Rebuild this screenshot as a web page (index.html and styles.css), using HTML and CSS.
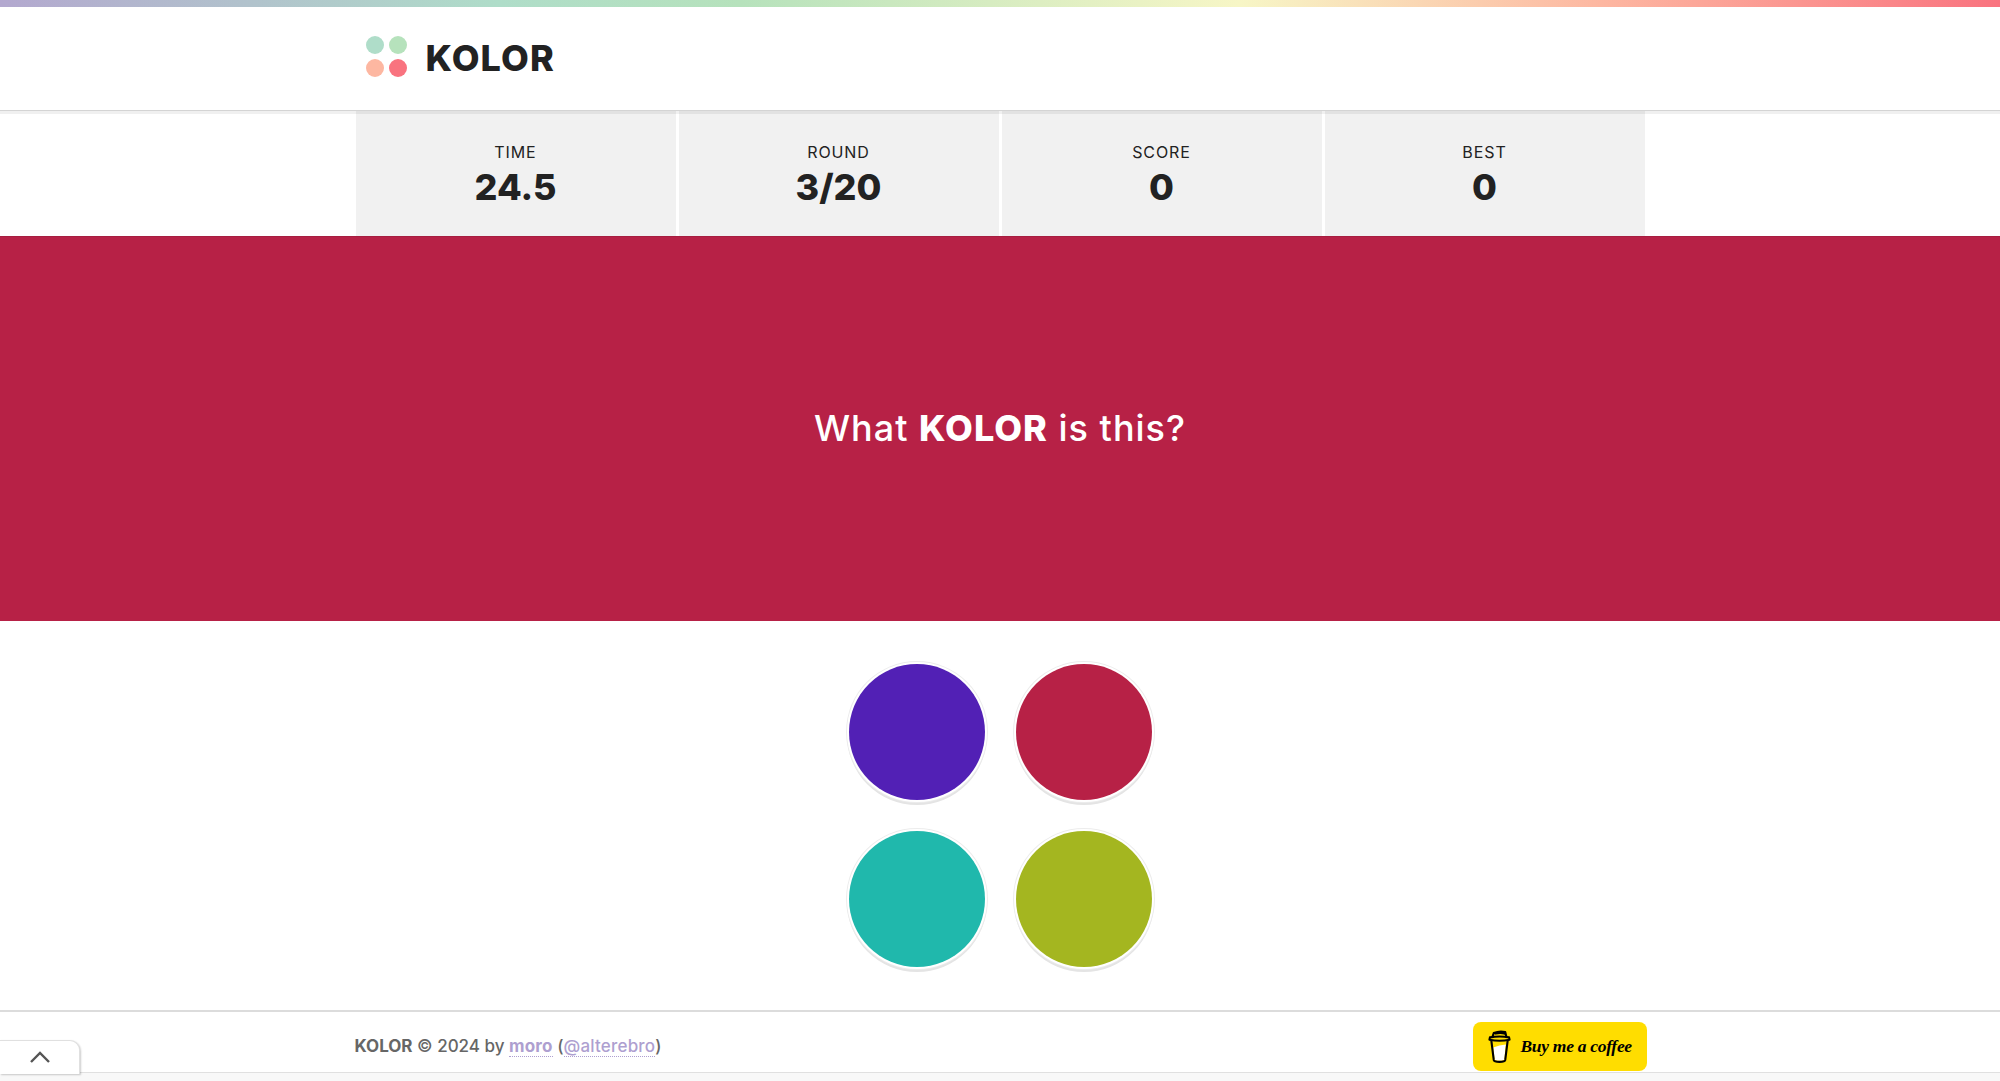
FILE: index.html
```html
<!DOCTYPE html>
<html lang="en">
<head>
    <meta charset="UTF-8">
    <meta name="viewport" content="width=device-width, initial-scale=1.0">
    <title>KOLOR</title>
    <link rel="stylesheet" href="styles.css">
</head>
<body>
    <div class="rainbow"></div>
    <header class="header">
        <div class="container brand">
            <div class="logo">
                <span class="dot dot-teal"></span>
                <span class="dot dot-green"></span>
                <span class="dot dot-peach"></span>
                <span class="dot dot-red"></span>
            </div>
            <span class="brand-name">KOLOR</span>
        </div>
    </header>
    <div class="container stats">
        <div class="stat"><span class="stat-label">TIME</span><span class="stat-value">24.5</span></div>
        <div class="stat"><span class="stat-label">ROUND</span><span class="stat-value">3/20</span></div>
        <div class="stat"><span class="stat-label">SCORE</span><span class="stat-value">0</span></div>
        <div class="stat"><span class="stat-label">BEST</span><span class="stat-value">0</span></div>
    </div>
    <section class="question">
        <h1>What <b>KOLOR</b> is this?</h1>
    </section>
    <section class="choices">
        <button class="choice choice-purple"></button>
        <button class="choice choice-crimson"></button>
        <button class="choice choice-teal"></button>
        <button class="choice choice-olive"></button>
    </section>
    <footer class="footer">
        <div class="container footer-row">
            <p class="credit"><b>KOLOR</b> © 2024 by <a class="strong-link" href="#">moro</a> (<a href="#">@alterebro</a>)</p>
            <a class="coffee" href="#">
                <svg class="cup" viewBox="0 0 24 34" width="23" height="33" fill="none" stroke="#000" stroke-width="2.200" stroke-linecap="round" stroke-linejoin="round">
                    <path d="M5.500 18 Q12 15.500 18.500 15 L17 31 Q12 32.500 7 31 Z" fill="#fff" stroke="none"/>
                    <path d="M3.500 11 L6 31 Q6.500 33 12 33 Q17.500 33 18 31 L20.500 11"/>
                    <path d="M2 7.500 Q12 5.500 22 7.500 L22.500 10 Q12 12 1.500 10 Z"/>
                    <path d="M5 6 L6 3 Q12 0.500 18 2 L19 6 M8 3.500 Q13 2 17 3.500"/>
                </svg>
                <span class="coffee-text">Buy me a coffee</span>
            </a>
        </div>
    </footer>
    <div class="bottom-bar"></div>
    <button class="top-tab">
        <svg viewBox="0 0 20 12" width="20" height="12" fill="none" stroke="#555" stroke-width="2.400"><path d="M1 11 L10 2 L19 11"/></svg>
    </button>
</body>
</html>
```

FILE: styles.css
```css
html, body {
    height: 100%;
}
body {
    font-family: 'Inter', sans-serif;
    color: #222222;
    background-color: #ffffff;
    margin: 0;
    padding: 0;
    display: flex;
    flex-direction: column;
    height: 1081px;
    overflow: hidden;
    position: relative;
}
.container {
    width: 1289px;
    margin: 0 auto;
}
.rainbow {
    height: 7px;
    background: linear-gradient(to right, #b3a8cf 0%, #afddc9 25%, #b6e2bc 37%, #f7f6c6 62%, #fdb7a1 80%, #f9737f 100%);
}
.header {
    height: 104px;
    box-sizing: border-box;
    border-bottom: 1px solid #d4d4d4;
    box-shadow: 0 3px 0 rgba(0,0,0,0.06);
    position: relative;
}
.brand {
    display: flex;
    align-items: center;
    height: 100%;
}
.logo {
    display: grid;
    grid-template-columns: 18px 18px;
    gap: 5px 5px;
    margin-left: 10px;
    margin-right: 19px;
    margin-bottom: 5px;
}
.dot {
    width: 18px;
    height: 18px;
    border-radius: 50%;
}
.dot-teal { background-color: #afddc9; }
.dot-green { background-color: #b6e2bc; }
.dot-peach { background-color: #fdb7a1; }
.dot-red { background-color: #f9737f; }
.brand-name {
    font-size: 36px;
    font-weight: 800;
    letter-spacing: 1.100px;
    margin-bottom: 1px;
}
.stats {
    display: flex;
    gap: 3px;
    height: 125px;
}
.stat {
    flex: 1;
    background-color: #f1f1f1;
    display: flex;
    flex-direction: column;
    align-items: center;
    padding-top: 31px;
    box-sizing: border-box;
}
.stat-label {
    font-size: 16px;
    line-height: 20px;
    letter-spacing: 0.900px;
}
.stat-value {
    font-size: 36px;
    font-weight: 800;
    line-height: 44px;
    margin-top: 3px;
}
.question {
    height: 385px;
    background-color: #b72146;
    border-top: 1px solid #a61e40;
    box-sizing: border-box;
    display: flex;
    align-items: center;
    justify-content: center;
}
.question h1 {
    margin: 0 0 3px 0;
    color: #ffffff;
    font-size: 36px;
    font-weight: 500;
    letter-spacing: 1px;
}
.question h1 b {
    font-weight: 800;
}
.choices {
    height: 389px;
    display: grid;
    grid-template-columns: 136px 136px;
    grid-auto-rows: 136px;
    gap: 31px;
    justify-content: center;
    padding-top: 43px;
    box-sizing: border-box;
}
.choice {
    width: 136px;
    height: 136px;
    padding: 0;
    border: none;
    border-radius: 50%;
    box-shadow: 0 0 0 2px #ffffff, 0 0 0 3px #ececec, 0 3px 0 2px #e4e4e4;
    cursor: pointer;
}
.choice-purple { background-color: #5220b5; }
.choice-crimson { background-color: #b72146; }
.choice-teal { background-color: #20b8ac; }
.choice-olive { background-color: #a4b620; }
.footer {
    height: 62px;
    box-sizing: border-box;
    border-top: 2px solid #dcdcdc;
}
.footer-row {
    display: flex;
    justify-content: space-between;
    align-items: center;
    height: 100%;
    width: 1293px;
    padding-left: 1px;
    box-sizing: border-box;
}
.credit {
    margin: 8px 0 0 0;
    font-size: 17px;
    font-weight: 500;
    color: #666666;
}
.credit a {
    color: #ae9fd0;
    text-decoration: none;
    letter-spacing: 0.200px;
    border-bottom: 1px dotted #ae9fd0;
}
.credit .strong-link {
    font-weight: 700;
}
.coffee {
    width: 174px;
    height: 49px;
    margin-top: 8px;
    background-color: #ffdd00;
    border-radius: 8px;
    display: flex;
    align-items: center;
    text-decoration: none;
    color: #000000;
    padding-left: 15px;
    box-sizing: border-box;
    gap: 10px;
}
.coffee-text {
    font-family: 'Liberation Serif', serif;
    font-style: italic;
    font-weight: 700;
    font-size: 17.500px;
    letter-spacing: -0.300px;
    white-space: nowrap;
}
.bottom-bar {
    flex: 1;
    background-color: #f8f8f8;
    border-top: 1px solid #e0e0e0;
}
.top-tab {
    position: absolute;
    left: 0;
    bottom: 7px;
    width: 80px;
    height: 34px;
    padding: 2px 0 0 0;
    background-color: #ffffff;
    border: 1px solid #e0e0e0;
    border-left: none;
    border-bottom: none;
    border-radius: 0 10px 0 0;
    box-shadow: 1px 1px 2px rgba(0,0,0,0.2);
}
```
